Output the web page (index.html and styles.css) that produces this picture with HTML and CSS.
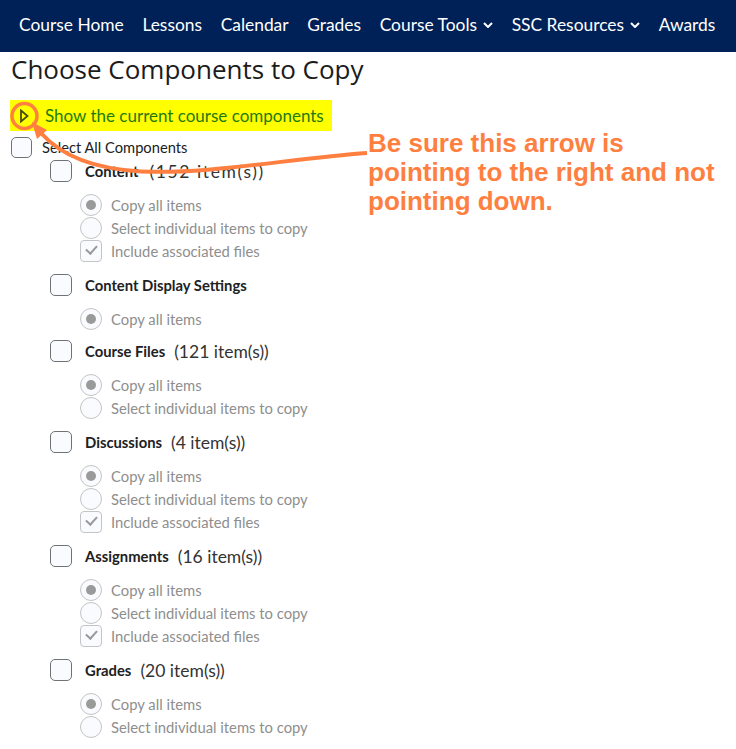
FILE: index.html
```html
<!DOCTYPE html>
<html>
<head>
    <link rel="stylesheet" href="styles.css">
</head>
<body>
    <nav class="navbar">
        <a class="nav-item" href="#">Course Home</a>
        <a class="nav-item" href="#">Lessons</a>
        <a class="nav-item" href="#">Calendar</a>
        <a class="nav-item" href="#">Grades</a>
        <a class="nav-item" href="#">Course Tools <svg class="chev" viewBox="0 0 10 6"><path d="M1 1 L5 5 L9 1" /></svg></a>
        <a class="nav-item" href="#">SSC Resources <svg class="chev" viewBox="0 0 10 6"><path d="M1 1 L5 5 L9 1" /></svg></a>
        <a class="nav-item" href="#">Awards</a>
    </nav>

    <div class="page">
        <h1 class="title">Choose Components to Copy</h1>

        <div class="toggle">
            <svg class="tri" viewBox="0 0 10 14"><path d="M2 1.5 L8.5 7 L2 12.5 Z" /></svg>
            <span>Show the current course components</span>
        </div>

        <div class="select-all">
            <span class="box small"></span>
            <span>Select All Components</span>
        </div>

        <div class="comp">
            <div class="comp-head"><span class="box"></span><b>Content</b><span class="count wide">(152 item(s))</span></div>
            <div class="opts">
                <div class="opt"><span class="radio on"></span>Copy all items</div>
                <div class="opt"><span class="radio"></span>Select individual items to copy</div>
                <div class="opt"><span class="check"></span>Include associated files</div>
            </div>
        </div>

        <div class="comp">
            <div class="comp-head"><span class="box"></span><b>Content Display Settings</b></div>
            <div class="opts short">
                <div class="opt"><span class="radio on"></span>Copy all items</div>
            </div>
        </div>

        <div class="comp">
            <div class="comp-head"><span class="box"></span><b>Course Files</b><span class="count">(121 item(s))</span></div>
            <div class="opts">
                <div class="opt"><span class="radio on"></span>Copy all items</div>
                <div class="opt"><span class="radio"></span>Select individual items to copy</div>
            </div>
        </div>

        <div class="comp">
            <div class="comp-head"><span class="box"></span><b>Discussions</b><span class="count">(4 item(s))</span></div>
            <div class="opts">
                <div class="opt"><span class="radio on"></span>Copy all items</div>
                <div class="opt"><span class="radio"></span>Select individual items to copy</div>
                <div class="opt"><span class="check"></span>Include associated files</div>
            </div>
        </div>

        <div class="comp">
            <div class="comp-head"><span class="box"></span><b>Assignments</b><span class="count">(16 item(s))</span></div>
            <div class="opts">
                <div class="opt"><span class="radio on"></span>Copy all items</div>
                <div class="opt"><span class="radio"></span>Select individual items to copy</div>
                <div class="opt"><span class="check"></span>Include associated files</div>
            </div>
        </div>

        <div class="comp">
            <div class="comp-head"><span class="box"></span><b>Grades</b><span class="count">(20 item(s))</span></div>
            <div class="opts">
                <div class="opt"><span class="radio on"></span>Copy all items</div>
                <div class="opt"><span class="radio"></span>Select individual items to copy</div>
            </div>
        </div>

        <!-- annotation drawn over the page -->
        <svg class="annot" width="736" height="150" viewBox="0 0 736 150">
            <circle cx="24.5" cy="64" r="12.5" fill="none" stroke="#ff7f40" stroke-width="3.5" />
            <path d="M367 101 C240 110 100 148 41 81" fill="none" stroke="#ff7f40" stroke-width="4" />
            <path d="M32 70 L47 78 L37 87 Z" fill="#ff7f40" />
        </svg>
        <div class="callout">Be sure this arrow is<br>pointing to the right and not<br>pointing down.</div>
    </div>
</body>
</html>
```

FILE: styles.css
```css
body
{
    margin: 0;
    font-family: Lato, "Open Sans", sans-serif;
    background: #fff;
    color: #202122;
}
.navbar
{
    background: #002157;
    height: 52px;
    display: flex;
    align-items: center;
    padding-left: 19px;
    padding-bottom: 3px;
    box-sizing: border-box;
    white-space: nowrap;
}
.nav-item
{
    color: #fff;
    text-decoration: none;
    font-size: 17.4px;
    margin-right: 18.6px;
    display: flex;
    align-items: center;
    flex: none;
}
.chev
{
    width: 10px;
    height: 6px;
    margin-left: 6px;
    fill: none;
    stroke: #fff;
    stroke-width: 2;
}
.page
{
    position: relative;
    padding-left: 11px;
}
.title
{
    font-family: "Open Sans", sans-serif;
    font-weight: 400;
    font-size: 26px;
    margin: 0;
    height: 48px;
    line-height: 34px;
    color: #1b1b1b;
}
.toggle
{
    display: inline-flex;
    align-items: center;
    background: #ffff00;
    height: 31px;
    padding: 0 8px 0 9px;
    margin-left: -1px;
    color: #1f7a10;
    font-size: 17px;
}
.tri
{
    width: 10px;
    height: 14px;
    margin-right: 16px;
    fill: none;
    stroke: #4b4a16;
    stroke-width: 1.8;
}
.select-all
{
    display: flex;
    align-items: center;
    font-size: 14.7px;
    margin-top: 5px;
    height: 22px;
}
.box
{
    width: 20px;
    height: 20px;
    border: 1px solid #6e7376;
    border-radius: 5px;
    background: #f9fbff;
    flex: none;
}
.box.small
{
    width: 19px;
    height: 19px;
    margin-right: 10px;
}
.comp
{
    padding-left: 39px;
}
.comp-head
{
    display: flex;
    align-items: center;
    height: 22px;
    margin-top: 2px;
    font-size: 14.8px;
}
.comp + .comp .comp-head
{
    margin-top: 0;
}
.comp-head .box
{
    margin-right: 13px;
}
.comp-head b
{
    font-weight: 700;
}
.count
{
    font-size: 17.5px;
    margin-left: 9px;
    color: #333;
}
.count.wide
{
    margin-left: 11px;
    letter-spacing: 1.6px;
}
.opts
{
    padding: 11.5px 0 11.5px 30px;
}
.opts.short
{
    padding-bottom: 9.5px;
}
.opt
{
    display: flex;
    align-items: center;
    height: 23px;
    font-size: 14.8px;
    color: #8e8e8e;
}
.radio
{
    width: 20px;
    height: 20px;
    border: 1px solid #c4c4c4;
    border-radius: 50%;
    background: #f9fbff;
    margin-right: 9px;
    position: relative;
    flex: none;
}
.radio.on::after
{
    content: "";
    position: absolute;
    left: 5px;
    top: 5px;
    width: 10px;
    height: 10px;
    border-radius: 50%;
    background: #9a9a9a;
}
.check
{
    width: 20px;
    height: 20px;
    border: 1px solid #c4c4c4;
    border-radius: 4px;
    background: #f9fbff;
    margin-right: 9px;
    flex: none;
    position: relative;
}
.check::after
{
    content: "";
    position: absolute;
    left: 5px;
    top: 4px;
    width: 9px;
    height: 5px;
    border-left: 2.5px solid #999;
    border-bottom: 2.5px solid #999;
    transform: rotate(-48deg);
}
.annot
{
    position: absolute;
    left: 0;
    top: 0;
    pointer-events: none;
}
.callout
{
    position: absolute;
    left: 368px;
    top: 77px;
    font-family: "Liberation Sans", Arial, sans-serif;
    font-weight: 700;
    font-size: 26px;
    line-height: 29px;
    color: #ff7f40;
}
```
